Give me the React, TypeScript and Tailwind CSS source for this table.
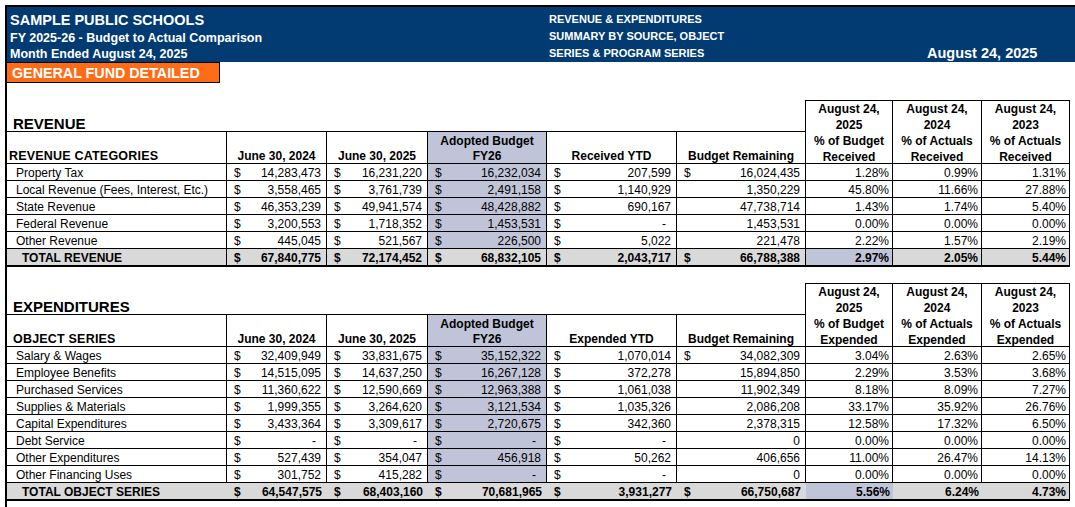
import React from "react";

const GRID =
  "grid grid-cols-[220px_100px_101px_119px_130px_129px_87px_89px_88px]";

type Row = {
  label: string;
  b: string;
  c: string;
  d: string;
  e: string;
  f: string;
  fd?: boolean;
  g: string;
  h: string;
  i: string;
};

const revenueRows: Row[] = [
  { label: "Property Tax", b: "14,283,473", c: "16,231,220", d: "16,232,034", e: "207,599", f: "16,024,435", fd: true, g: "1.28%", h: "0.99%", i: "1.31%" },
  { label: "Local Revenue (Fees, Interest, Etc.)", b: "3,558,465", c: "3,761,739", d: "2,491,158", e: "1,140,929", f: "1,350,229", g: "45.80%", h: "11.66%", i: "27.88%" },
  { label: "State Revenue", b: "46,353,239", c: "49,941,574", d: "48,428,882", e: "690,167", f: "47,738,714", g: "1.43%", h: "1.74%", i: "5.40%" },
  { label: "Federal Revenue", b: "3,200,553", c: "1,718,352", d: "1,453,531", e: "-", f: "1,453,531", g: "0.00%", h: "0.00%", i: "0.00%" },
  { label: "Other Revenue", b: "445,045", c: "521,567", d: "226,500", e: "5,022", f: "221,478", g: "2.22%", h: "1.57%", i: "2.19%" },
];
const revenueTotal: Row = { label: "TOTAL REVENUE", b: "67,840,775", c: "72,174,452", d: "68,832,105", e: "2,043,717", f: "66,788,388", fd: true, g: "2.97%", h: "2.05%", i: "5.44%" };

const expRows: Row[] = [
  { label: "Salary & Wages", b: "32,409,949", c: "33,831,675", d: "35,152,322", e: "1,070,014", f: "34,082,309", fd: true, g: "3.04%", h: "2.63%", i: "2.65%" },
  { label: "Employee Benefits", b: "14,515,095", c: "14,637,250", d: "16,267,128", e: "372,278", f: "15,894,850", g: "2.29%", h: "3.53%", i: "3.68%" },
  { label: "Purchased Services", b: "11,360,622", c: "12,590,669", d: "12,963,388", e: "1,061,038", f: "11,902,349", g: "8.18%", h: "8.09%", i: "7.27%" },
  { label: "Supplies & Materials", b: "1,999,355", c: "3,264,620", d: "3,121,534", e: "1,035,326", f: "2,086,208", g: "33.17%", h: "35.92%", i: "26.76%" },
  { label: "Capital Expenditures", b: "3,433,364", c: "3,309,617", d: "2,720,675", e: "342,360", f: "2,378,315", g: "12.58%", h: "17.32%", i: "6.50%" },
  { label: "Debt Service", b: "-", c: "-", d: "-", e: "-", f: "0", g: "0.00%", h: "0.00%", i: "0.00%" },
  { label: "Other Expenditures", b: "527,439", c: "354,047", d: "456,918", e: "50,262", f: "406,656", g: "11.00%", h: "26.47%", i: "14.13%" },
  { label: "Other Financing Uses", b: "301,752", c: "415,282", d: "-", e: "-", f: "0", g: "0.00%", h: "0.00%", i: "0.00%" },
];
const expTotal: Row = { label: "TOTAL OBJECT SERIES", b: "64,547,575", c: "68,403,160", d: "70,681,965", e: "3,931,277", f: "66,750,687", fd: true, g: "5.56%", h: "6.24%", i: "4.73%" };

function Money({ v, dollar, cls }: { v: string; dollar: boolean; cls: string }) {
  return (
    <div className={"flex justify-between pl-[7px] pr-[5px] " + cls}>
      <span>{dollar ? "$" : ""}</span>
      <span>{v === "-" ? <span className="mr-[5px]">-</span> : v}</span>
    </div>
  );
}

function DataRow({ r }: { r: Row }) {
  const base = "h-[17px] pt-[1px] border-r border-b border-black leading-[16px] text-[12px]";
  return (
    <>
      <div className={base + " pl-[9px] whitespace-nowrap"}>{r.label}</div>
      <Money v={r.b} dollar cls={base} />
      <Money v={r.c} dollar cls={base} />
      <Money v={r.d} dollar cls={base + " bg-[#c0c4d8]"} />
      <Money v={r.e} dollar cls={base} />
      <Money v={r.f} dollar={!!r.fd} cls={base} />
      <div className={base + " text-right pr-[3px]"}>{r.g}</div>
      <div className={base + " text-right pr-[3px]"}>{r.h}</div>
      <div className={base + " text-right pr-[3px]"}>{r.i}</div>
    </>
  );
}

function TotalRow({ r, lines }: { r: Row; lines: boolean }) {
  const base =
    "h-[18px] pt-[1px] border-b-2 border-black leading-[16px] text-[12px] font-bold bg-[#d9d9d9]" +
    (lines ? " border-r" : "");
  return (
    <>
      <div className={base + " pl-[15px] whitespace-nowrap"}>{r.label}</div>
      <Money v={r.b} dollar cls={base} />
      <Money v={r.c} dollar cls={base} />
      <Money v={r.d} dollar cls={base} />
      <Money v={r.e} dollar cls={base} />
      <Money v={r.f} dollar cls={base} />
      <div className={base + " text-right pr-[3px] !bg-[#c0c4d8]"}>{r.g}</div>
      <div className={base + " text-right pr-[3px]"}>{r.h}</div>
      <div className={base + " text-right pr-[3px] border-r"}>{r.i}</div>
    </>
  );
}

function PctHead({ col, year, kind, word }: { col: string; year: string; kind: string; word: string }) {
  return (
    <div
      className={
        col +
        " row-start-1 row-span-2 border-t border-r border-b border-black text-center text-[12px] font-bold leading-[16px]"
      }
    >
      <div>August 24,</div>
      <div>{year}</div>
      <div>{kind}</div>
      <div>{word}</div>
    </div>
  );
}

function Section({
  title,
  cat,
  catPad,
  ytd,
  word,
  rows,
  total,
  totalLines,
  spacer,
}: {
  title: string;
  cat: string;
  catPad: string;
  ytd: string;
  word: string;
  rows: Row[];
  total: Row;
  totalLines: boolean;
  spacer: string;
}) {
  const h2 =
    "row-start-2 border-r border-b border-black flex flex-col justify-end items-center text-[12px] font-bold leading-[14px]";
  return (
    <>
      <div className={spacer} />
      <div className={GRID + " grid-rows-[32px_32px]"}>
        <div className="col-start-1 row-start-1 border-b border-black flex items-end pl-[6px] text-[15px] font-bold leading-[15px]">
          {title}
        </div>
        <div className="col-start-2 col-span-4 row-start-1 border-b border-black" />
        <div className="col-start-6 row-start-1 border-b border-r border-black" />
        <PctHead col="col-start-7" year="2025" kind="% of Budget" word={word} />
        <PctHead col="col-start-8" year="2024" kind="% of Actuals" word={word} />
        <PctHead col="col-start-9" year="2023" kind="% of Actuals" word={word} />
        <div
          className={
            "col-start-1 row-start-2 border-r border-b border-black flex items-end text-[12.5px] font-bold leading-[14px] tracking-[0.2px] " +
            catPad
          }
        >
          {cat}
        </div>
        <div className={"col-start-2 " + h2}>June 30, 2024</div>
        <div className={"col-start-3 " + h2}>June 30, 2025</div>
        <div className={"col-start-4 bg-[#c0c4d8] " + h2}>
          <div className="leading-[16px]">Adopted Budget</div>
          <div>FY26</div>
        </div>
        <div className={"col-start-5 " + h2}>{ytd}</div>
        <div className={"col-start-6 " + h2}>Budget Remaining</div>
      </div>
      <div className={GRID}>
        {rows.map((r) => (
          <DataRow key={r.label} r={r} />
        ))}
        <TotalRow r={total} lines={totalLines} />
      </div>
    </>
  );
}

export default function App() {
  return (
    <div className="w-[1075px] h-[507px] bg-white overflow-hidden pt-[5px] font-['Liberation_Sans',Arial,sans-serif] text-black">
      <div className="ml-[5px] h-[502px] border-t-2 border-l-2 border-black">
        <div className="h-[55px] bg-[#023a72] flex text-white font-bold">
          <div className="w-[542px] pl-[3px] pt-[4px]">
            <div className="text-[14.5px] leading-[18px]">SAMPLE PUBLIC SCHOOLS</div>
            <div className="text-[12.5px] leading-[18px]">FY 2025-26 - Budget to Actual Comparison</div>
            <div className="text-[12.5px] leading-[15px]">Month Ended August 24, 2025</div>
          </div>
          <div className="w-[378px] pt-[4px] text-[11px] leading-[17px]">
            <div>REVENUE &amp; EXPENDITURES</div>
            <div>SUMMARY BY SOURCE, OBJECT</div>
            <div>SERIES &amp; PROGRAM SERIES</div>
          </div>
          <div className="pt-[37px] text-[14.5px] leading-[18px]">August 24, 2025</div>
        </div>
        <div className="h-[21px]">
          <div className="w-[213px] h-full bg-[#ff6c17] border border-l-0 border-black text-white text-[14.3px] font-bold leading-[18px] pt-[1px] pl-[5px] whitespace-nowrap">
            GENERAL FUND DETAILED
          </div>
        </div>
        <Section
          title="REVENUE"
          cat="REVENUE CATEGORIES"
          catPad="pl-[2px]"
          ytd="Received YTD"
          word="Received"
          rows={revenueRows}
          total={revenueTotal}
          totalLines={true}
          spacer="h-[17px]"
        />
        <Section
          title="EXPENDITURES"
          cat="OBJECT SERIES"
          catPad="pl-[6px]"
          ytd="Expended YTD"
          word="Expended"
          rows={expRows}
          total={expTotal}
          totalLines={false}
          spacer="h-[16px]"
        />
      </div>
    </div>
  );
}
